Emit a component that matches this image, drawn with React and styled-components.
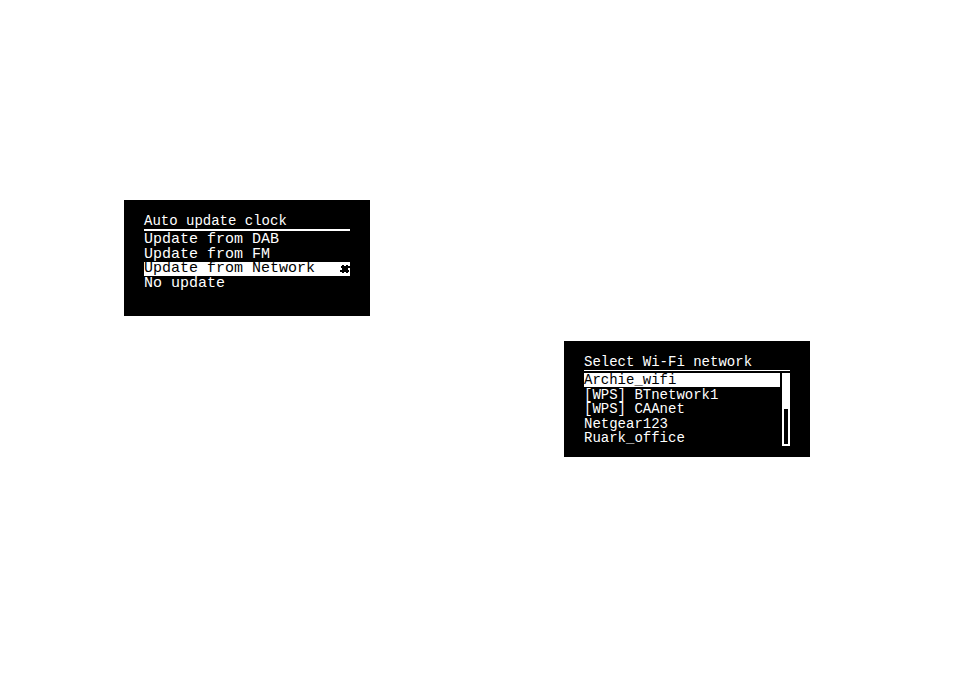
import React, { useState } from 'react';
import styled, { createGlobalStyle } from 'styled-components';

const GlobalStyle = createGlobalStyle`
  * { box-sizing: border-box; }
  body { margin: 0; background: #fff; }
`;

const Page = styled.main`
  min-height: 100vh;
  padding: 200px 144px 40px 124px;
  display: flex;
  justify-content: space-between;
  align-items: flex-start;
  gap: 24px;
  font-family: "Liberation Mono", "Courier New", monospace;
`;

const Screen = styled.section`
  flex: 0 1 246px;
  min-height: 116px;
  margin-top: ${(p) => (p.$lower ? '141px' : '0')};
  padding: 12px 20px 10px;
  background: #000;
  color: #fff;
`;

const Title = styled.h2`
  margin: 0 0 2px;
  height: ${(p) => (p.$rule === 2 ? 19 : 18)}px;
  border-bottom: ${(p) => p.$rule}px solid #fff;
  font-size: 14px;
  font-weight: 400;
  line-height: 18px;
  white-space: nowrap;
`;

const Body = styled.div`
  display: flex;
  gap: 2px;
`;

const List = styled.ul`
  flex: 1;
  min-width: 0;
  height: 73px;
  margin: 0;
  padding: 0;
  list-style: none;
  display: grid;
  grid-template-rows: repeat(5, 1fr);
`;

const Row = styled.button`
  width: 100%;
  height: 14px;
  padding: 0;
  border: 0;
  display: flex;
  align-items: center;
  justify-content: space-between;
  background: ${(p) => (p.$selected ? '#fff' : 'transparent')};
  color: ${(p) => (p.$selected ? '#000' : '#fff')};
  font-family: inherit;
  font-size: ${(p) => (p.$compact ? 14 : 15)}px;
  line-height: 14px;
  white-space: nowrap;
  cursor: pointer;
`;

const Item = styled.li`
  min-height: 0;
`;

const Track = styled.div`
  width: 8px;
  height: 73px;
  border: 2px solid #fff;
`;

const Thumb = styled.div`
  height: 34px;
  background: #fff;
`;

const Mark = () => (
  <svg width="10" height="8" viewBox="0 0 10 8" shapeRendering="crispEdges" aria-hidden="true">
    <path d="M2 0h2v1h2v-1h2v1h2v2h-2v2h1v2h-1v1h-2v-1h-2v1h-2v-1h-2v-2h2v-2h-1v-2h1z" fill="#000" />
  </svg>
);

function Menu({ title, items, initial, active, rule, scroll, lower }) {
  const [selected, setSelected] = useState(initial);
  return (
    <Screen $lower={lower} aria-label={title}>
      <Title $rule={rule}>{title}</Title>
      <Body>
        <List>
          {items.map((item, i) => (
            <Item key={item}>
              <Row
                type="button"
                $compact={scroll}
                $selected={i === selected}
                aria-pressed={i === selected}
                onClick={() => setSelected(i)}
              >
                <span>{item}</span>
                {i === active && <Mark />}
              </Row>
            </Item>
          ))}
        </List>
        {scroll && (
          <Track>
            <Thumb />
          </Track>
        )}
      </Body>
    </Screen>
  );
}

export default function App() {
  return (
    <>
      <GlobalStyle />
      <Page>
        <Menu
          title="Auto update clock"
          items={['Update from DAB', 'Update from FM', 'Update from Network', 'No update']}
          initial={2}
          active={2}
          rule={2}
        />
        <Menu
          title="Select Wi-Fi network"
          items={['Archie_wifi', '[WPS] BTnetwork1', '[WPS] CAAnet', 'Netgear123', 'Ruark_office']}
          initial={0}
          rule={1}
          scroll
          lower
        />
      </Page>
    </>
  );
}
